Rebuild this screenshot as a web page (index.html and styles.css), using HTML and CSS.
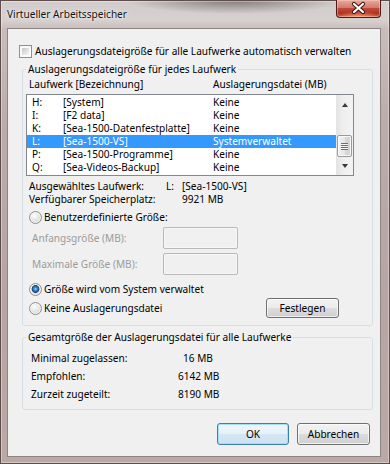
FILE: index.html
```html
<!DOCTYPE html>
<html lang="de">
<head>
<meta charset="utf-8">
<title>Virtueller Arbeitsspeicher</title>
<link rel="stylesheet" href="styles.css">
</head>
<body>
<div class="window">
  <div class="titlebar">
    <span class="title">Virtueller Arbeitsspeicher</span>
    <div class="close">
      <svg width="43" height="17" viewBox="0 0 43 17">
        <path d="M17 4 L26 12 M26 4 L17 12" stroke="#3b1410" stroke-width="4.2" stroke-linecap="round"/>
        <path d="M17 4 L26 12 M26 4 L17 12" stroke="#ffffff" stroke-width="2.2" stroke-linecap="round"/>
      </svg>
    </div>
  </div>
  <div class="client">
    <div class="check-row">
      <span class="checkbox"></span>
      <span>Auslagerungsdateigröße für alle Laufwerke automatisch verwalten</span>
    </div>

    <fieldset class="group group-drives">
      <legend>Auslagerungsdateigröße für jedes Laufwerk</legend>
      <div class="list-head">
        <span class="head-drive">Laufwerk [Bezeichnung]</span>
        <span>Auslagerungsdatei (MB)</span>
      </div>
      <div class="listbox">
        <div class="rows">
          <div class="row"><span class="c1">H:</span><span class="c2">[System]</span><span>Keine</span></div>
          <div class="row"><span class="c1">I:</span><span class="c2">[F2 data]</span><span>Keine</span></div>
          <div class="row"><span class="c1">K:</span><span class="c2">[Sea-1500-Datenfestplatte]</span><span>Keine</span></div>
          <div class="row selected"><span class="c1">L:</span><span class="c2">[Sea-1500-VS]</span><span>Systemverwaltet</span></div>
          <div class="row"><span class="c1">P:</span><span class="c2">[Sea-1500-Programme]</span><span>Keine</span></div>
          <div class="row"><span class="c1">Q:</span><span class="c2">[Sea-Videos-Backup]</span><span>Keine</span></div>
        </div>
        <div class="scrollbar">
          <div class="sb-btn"><span class="arrow-up"></span></div>
          <div class="sb-track">
            <div class="thumb"><span class="grip"></span></div>
          </div>
          <div class="sb-btn"><span class="arrow-down"></span></div>
        </div>
      </div>

      <div class="info">
        <span>Ausgewähltes Laufwerk:</span><span>L:</span><span>[Sea-1500-VS]</span>
        <span>Verfügbarer Speicherplatz:</span><span></span><span>9921 MB</span>
      </div>

      <div class="radio-row first-radio">
        <span class="radio"></span><span>Benutzerdefinierte Größe:</span>
      </div>
      <div class="size-row">
        <span class="size-label">Anfangsgröße (MB):</span><span class="input"></span>
      </div>
      <div class="size-row second">
        <span class="size-label">Maximale Größe (MB):</span><span class="input"></span>
      </div>
      <div class="radio-row system-radio">
        <span class="radio checked"></span><span>Größe wird vom System verwaltet</span>
      </div>
      <div class="radio-row last-radio">
        <span class="radio"></span><span>Keine Auslagerungsdatei</span>
        <span class="btn btn-set">Festlegen</span>
      </div>
    </fieldset>

    <fieldset class="group group-total">
      <legend>Gesamtgröße der Auslagerungsdatei für alle Laufwerke</legend>
      <div class="totals">
        <span>Minimal zugelassen:</span><span class="v-short">16 MB</span>
        <span>Empfohlen:</span><span>6142 MB</span>
        <span>Zurzeit zugeteilt:</span><span>8190 MB</span>
      </div>
    </fieldset>

    <div class="buttons">
      <span class="btn btn-default">OK</span>
      <span class="btn btn-cancel">Abbrechen</span>
    </div>
  </div>
</div>
</body>
</html>
```
FILE: styles.css
```css
* { box-sizing: border-box; }

body {
  margin: 0;
  font-family: "Noto Sans", "DejaVu Sans", sans-serif;
  font-size: 10.1px;
  line-height: 13px;
  color: #000;
}

.window {
  width: 390px;
  height: 464px;
  display: flex;
  flex-direction: column;
  background:
    radial-gradient(ellipse 110px 14px at 235px 0px, rgba(60, 50, 50, 0.55), rgba(60, 50, 50, 0) 100%),
    linear-gradient(180deg, #d2cdcc 0px, #d6d1d0 20px, #c9bdbb 29px, #bcadaa 120px, #b6a5a2 300px, #bba9a6 464px);
  box-shadow: inset 0 0 0 1px #5e4d4a, inset 0 0 0 2px rgba(255, 255, 255, 0.35);
}

.titlebar {
  height: 28px;
  flex: none;
  display: flex;
  justify-content: space-between;
  align-items: flex-start;
  padding-left: 7px;
  padding-right: 9px;
}

.title {
  padding-top: 8px;
  color: #111;
  text-shadow: 0 0 5px rgba(255, 255, 255, 0.9), 0 0 2px rgba(255, 255, 255, 0.8);
}

.close {
  width: 45px;
  height: 18px;
  border: 1px solid #4d1a14;
  border-top: none;
  border-radius: 0 0 4px 4px;
  background:
    radial-gradient(ellipse 22px 6px at 50% 100%, rgba(255, 170, 120, 0.8), rgba(255, 170, 120, 0) 100%),
    linear-gradient(180deg, #e7aa9f 0%, #d47a6c 45%, #c04a36 50%, #b0321f 80%, #c55a3f 100%);
  box-shadow: inset 0 0 0 1px rgba(255, 210, 200, 0.45);
}

.close svg { display: block; }

.client {
  flex: 1;
  margin: 0 9px 7px 7px;
  background: #f0f0f0;
  border: 1px solid #8c8584;
  padding: 16px 7px 0 11px;
  display: flex;
  flex-direction: column;
  align-items: flex-start;
}

.check-row {
  display: flex;
  align-items: center;
  height: 13px;
}

.checkbox {
  width: 13px;
  height: 13px;
  margin-right: 3px;
  border: 1px solid #8e8f8f;
  padding: 2px;
  background: linear-gradient(135deg, #c4c8cd, #f6f6f6) content-box, #fbfbfb;
}

.group {
  margin: 5px 0 0 3px;
  width: 351px;
  min-width: 0;
  border: 1px solid #d5dfe5;
  border-radius: 3px;
}

.group legend {
  padding: 0 2px;
  line-height: 13px;
}

.group-drives {
  padding: 2px 18px 7px 3px;
}

.list-head {
  display: flex;
  padding-left: 3px;
}

.head-drive { width: 184px; }

.listbox {
  margin-top: 3px;
  height: 82px;
  border: 1px solid #828790;
  background: #fff;
  display: flex;
}

.rows {
  flex: 1;
  padding: 1px 0;
}

.row {
  display: flex;
  height: 13px;
  padding-left: 5px;
  white-space: nowrap;
}

.row.selected {
  background: #3399ff;
  color: #fff;
}

.c1 { width: 31px; }
.c2 { width: 150px; }

.scrollbar {
  width: 17px;
  display: flex;
  flex-direction: column;
  background: linear-gradient(90deg, #e3e3e3, #eeeeee 40%, #f3f3f3);
}

.sb-btn {
  height: 17px;
  display: flex;
  align-items: center;
  justify-content: center;
}

.arrow-up, .arrow-down {
  width: 0;
  height: 0;
  border-left: 3.5px solid transparent;
  border-right: 3.5px solid transparent;
}

.arrow-up { border-bottom: 4px solid #3a3a3a; margin-top: 2px; }
.arrow-down { border-top: 4px solid #3a3a3a; margin-bottom: 2px; }

.sb-track {
  flex: 1;
  padding: 23px 1px 0 1px;
}

.thumb {
  height: 22px;
  border: 1px solid #9a9a9a;
  border-radius: 2px;
  background: linear-gradient(90deg, #f2f2f2, #e6e6e6 50%, #d9d9d9 51%, #d2d2d2);
  box-shadow: inset 0 0 0 1px rgba(255, 255, 255, 0.8);
  display: flex;
  align-items: center;
  justify-content: center;
}

.grip {
  width: 7px;
  height: 7px;
  background: repeating-linear-gradient(180deg, #6f6f6f 0, #6f6f6f 1px, #f4f4f4 1px, #f4f4f4 2px);
}

.info {
  margin-top: 4px;
  padding-left: 3px;
  display: grid;
  grid-template-columns: 137px 16px auto;
  line-height: 13px;
}

.radio-row {
  display: flex;
  align-items: center;
  padding-left: 3px;
  height: 15px;
}

.first-radio { margin-top: 4px; }
.system-radio { margin-top: 7px; }
.last-radio { margin-top: 1px; height: 20px; }

.radio {
  width: 13px;
  height: 13px;
  margin-right: 2px;
  border-radius: 50%;
  border: 1px solid #8e8f8f;
  background: radial-gradient(circle at 40% 35%, #fdfdfd 0, #e8e8e8 40%, #cfcfcf 100%);
  box-shadow: inset 0 0 0 1px rgba(255, 255, 255, 0.6);
}

.radio.checked {
  background:
    radial-gradient(circle at 50% 45%, #a6dcf8 0, #3a8fd0 1.5px, #1c5c9a 3px, #173f6a 3.6px, rgba(23, 63, 106, 0) 4.2px),
    radial-gradient(circle at 40% 35%, #fdfdfd 0, #e8e8e8 40%, #cfcfcf 100%);
}

.size-row {
  display: flex;
  align-items: center;
  height: 22px;
  margin-top: 2px;
  padding-left: 6px;
  color: #9b9b9b;
}

.size-row.second { margin-top: 4px; }

.size-label { width: 131px; }

.input {
  width: 75px;
  height: 22px;
  border: 1px solid #b9b9b9;
  border-radius: 2px;
  background: #f0f0f0;
  box-shadow: inset 0 0 0 1px #f7f7f7;
}

.btn {
  display: flex;
  align-items: center;
  justify-content: center;
  border: 1px solid #707070;
  border-radius: 3px;
  background: linear-gradient(180deg, #f2f2f2 0%, #ebebeb 50%, #dddddd 51%, #cfcfcf 100%);
  box-shadow: inset 0 0 0 1px rgba(255, 255, 255, 0.7);
}

.btn-set {
  width: 73px;
  height: 20px;
  margin-left: auto;
  margin-right: 15px;
}

.group-total {
  padding: 5px 18px 6px 3px;
}

.totals {
  display: grid;
  grid-template-columns: 147px auto;
  line-height: 18px;
  padding-left: 5px;
}

.v-short { padding-left: 5px; }

.buttons {
  display: flex;
  gap: 8px;
  margin-top: 13px;
  align-self: flex-end;
  margin-right: 3px;
}

.buttons .btn {
  height: 22px;
}

.btn-default {
  width: 72px;
  border-color: #3c7fb1;
  background: linear-gradient(180deg, #eef6fb 0%, #e5f0f8 50%, #d6e7f3 51%, #cde1ef 100%);
  box-shadow: inset 0 0 0 1px #a9dcf6;
}

.btn-cancel { width: 73px; }
```
